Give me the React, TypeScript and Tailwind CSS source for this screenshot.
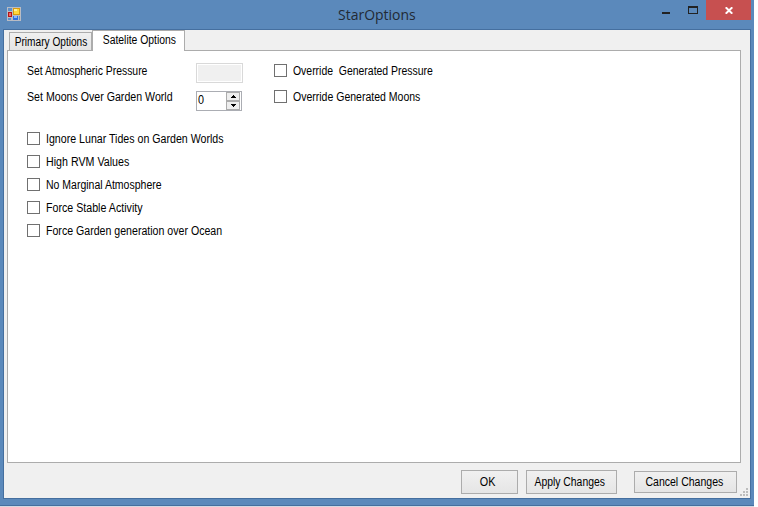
import { useState } from 'react';
import clsx from 'clsx';

const overrides = [
    { id: 'pressure', label: 'Override  Generated Pressure', style: 'scale-x-[0.87]' },
    { id: 'moons', label: 'Override Generated Moons', style: 'scale-x-[0.876]' },
];

const options = [
    { id: 'tides', label: 'Ignore Lunar Tides on Garden Worlds', style: 'scale-x-[0.885]' },
    { id: 'rvm', label: 'High RVM Values', style: 'scale-x-[0.89]' },
    { id: 'marginal', label: 'No Marginal Atmosphere', style: 'scale-x-[0.875]' },
    { id: 'stable', label: 'Force Stable Activity', style: 'scale-x-[0.888]' },
    { id: 'garden', label: 'Force Garden generation over Ocean', style: 'scale-x-[0.883]' },
];

function AppIcon() {
    return (
        <svg width="14" height="14" viewBox="0 0 14 14" shapeRendering="crispEdges">
            <rect width="14" height="14" fill="#b9bcc4" />
            <rect x="1" y="1" width="4" height="3" fill="#5f8fc6" />
            <rect x="1" y="11" width="3" height="2" fill="#5f8fc6" />
            <rect x="12" y="9" width="1" height="4" fill="#5f8fc6" />
            <rect x="1" y="5" width="4" height="5" fill="#b5121b" />
            <rect x="2" y="6" width="2" height="3" fill="#ee6a5c" />
            <rect x="6" y="1" width="7" height="7" fill="#d99a10" />
            <rect x="7" y="2" width="5" height="5" fill="#ffd83d" />
            <rect x="7" y="2" width="3" height="2" fill="#fff09a" />
            <rect x="6" y="9" width="5" height="4" fill="#2f6fe0" />
            <rect x="7" y="9" width="3" height="2" fill="#86b4ff" />
        </svg>
    );
}

function TitleBar() {
    return (
        <div className="flex h-[29px] shrink-0 items-start">
            <div className="flex w-[338px] pl-[7px] pt-[7px]">
                <AppIcon />
            </div>
            <div className="origin-left scale-x-[0.932] whitespace-nowrap pt-[4px] font-['Open_Sans',sans-serif] text-[15px] leading-[20px] text-[#222a35]">
                StarOptions
            </div>
            <div className="flex flex-1 justify-end pr-[3px]">
                <button className="flex h-5 w-[28px] justify-center pt-3">
                    <span className="h-[2px] w-2 bg-[#222]" />
                </button>
                <button className="flex h-5 w-[26px] justify-center pt-[6px]">
                    <span className="h-2 w-[10px] border border-t-2 border-[#222]" />
                </button>
                <button className="flex h-5 w-[45px] justify-center bg-[#c75050] pt-[7px]">
                    <svg width="8" height="7" viewBox="0 0 8 7">
                        <path d="M0.7 0.3L7.3 6.7M7.3 0.3L0.7 6.7" stroke="#fff" strokeWidth="2" />
                    </svg>
                </button>
            </div>
        </div>
    );
}

function CheckBox({ label, style }: { label: string; style: string }) {
    const [checked, setChecked] = useState(false);

    return (
        <label className="flex h-[13px] items-center">
            <input
                type="checkbox"
                checked={checked}
                onChange={() => setChecked(!checked)}
                className="h-[13px] w-[13px] shrink-0 appearance-none border border-[#707070] bg-white checked:bg-[#707070]"
            />
            <span className={clsx('ml-[6px] mt-px origin-left whitespace-pre', style)}>{label}</span>
        </label>
    );
}

function Spinner() {
    const [value, setValue] = useState(0);

    return (
        <div className="flex h-5 w-[46px] border border-[#abadb3] bg-white pr-px">
            <span className="flex-1 origin-left scale-x-90 pl-px leading-[17px]">{value}</span>
            <div className="flex w-[14px] flex-col">
                {[1, -1].map((step) => (
                    <button
                        key={step}
                        onClick={() => setValue(Math.max(0, value + step))}
                        className="flex flex-1 items-center justify-center border border-[#acacac] bg-[#eeeeee]"
                    >
                        <svg width="5" height="3" viewBox="0 0 5 3" shapeRendering="crispEdges">
                            <path d={step > 0 ? 'M2 0h1v1h1v1h1v1H0V2h1V1h1z' : 'M0 0h5v1H4v1H3v1H2V2H1V1H0z'} />
                        </svg>
                    </button>
                ))}
            </div>
        </div>
    );
}

function Grip() {
    return (
        <svg width="8" height="8" viewBox="0 0 8 8" fill="#bdbdbd" shapeRendering="crispEdges">
            <path d="M6 0h2v2H6zM3 3h2v2H3zM6 3h2v2H6zM0 6h2v2H0zM3 6h2v2H3zM6 6h2v2H6z" />
        </svg>
    );
}

const buttonClass = 'flex items-center justify-center border border-[#acacac] bg-linear-to-b from-[#f0f0f0] to-[#e5e5e5] whitespace-nowrap';

export default function App() {
    return (
        <div className="h-[507px] w-[758px] overflow-hidden bg-white font-['Liberation_Sans',Arial,sans-serif] text-[12px] leading-[14px] text-black">
            <div className="flex h-[507px] w-[754px] flex-col border-b border-[#d5d9e2] bg-[#5b89bb]">
                <TitleBar />
                <div className="mx-[3px] flex h-[470px] flex-col border border-[#456f9f] bg-[#f0f0f0]">
                    {/* Tabs */}
                    <div className="flex h-5 items-end pl-[5px]">
                        <button className={clsx(buttonClass, 'h-[18px] w-[83px] border-b-0 pl-px pt-px')}>
                            <span className="scale-x-[0.843]">Primary Options</span>
                        </button>
                        <button className="z-10 -mb-px flex h-[21px] w-[93px] items-center justify-center border border-b-0 border-[#acacac] bg-white pb-[2px] pl-[2px] whitespace-nowrap">
                            <span className="scale-x-[0.865]">Satelite Options</span>
                        </button>
                    </div>

                    {/* Tab page */}
                    <div className="ml-[3px] h-[413px] w-[734px] border border-[#acacac] bg-white pl-[19px]">
                        <div className="flex pt-3">
                            <div className="flex w-[169px] flex-col items-start gap-3 pt-[1px] whitespace-nowrap">
                                <span className="origin-left scale-x-[0.868]">Set Atmospheric Pressure</span>
                                <span className="origin-left scale-x-[0.885]">Set Moons Over Garden World</span>
                            </div>
                            <div className="flex w-[78px] flex-col gap-2">
                                <input disabled className="h-5 w-[47px] border border-[#d9d9d9] bg-[#f0f0f0] outline outline-1 -outline-offset-2 outline-white" />
                                <Spinner />
                            </div>
                            <div className="flex flex-col gap-[13px] pt-[1px]">
                                {overrides.map((o) => (
                                    <CheckBox key={o.id} label={o.label} style={o.style} />
                                ))}
                            </div>
                        </div>
                        <div className="mt-[21px] flex flex-col gap-[10px]">
                            {options.map((o) => (
                                <CheckBox key={o.id} label={o.label} style={o.style} />
                            ))}
                        </div>
                    </div>

                    {/* Footer */}
                    <div className="flex flex-1 items-start pl-[457px] pt-[7px]">
                        <button className={clsx(buttonClass, 'h-6 w-[57px] pr-[3px]')}>
                            <span className="scale-x-90">OK</span>
                        </button>
                        <button className={clsx(buttonClass, 'ml-2 h-6 w-[91px] pr-[3px]')}>
                            <span className="scale-x-[0.866]">Apply Changes</span>
                        </button>
                        <button className={clsx(buttonClass, 'ml-[17px] mt-px h-[22px] w-[103px] pr-[3px]')}>
                            <span className="scale-x-[0.878]">Cancel Changes</span>
                        </button>
                        <div className="ml-[3px] mt-[18px]">
                            <Grip />
                        </div>
                    </div>
                </div>
                <div className="mt-auto h-px bg-[#456f9f]" />
            </div>
        </div>
    );
}
